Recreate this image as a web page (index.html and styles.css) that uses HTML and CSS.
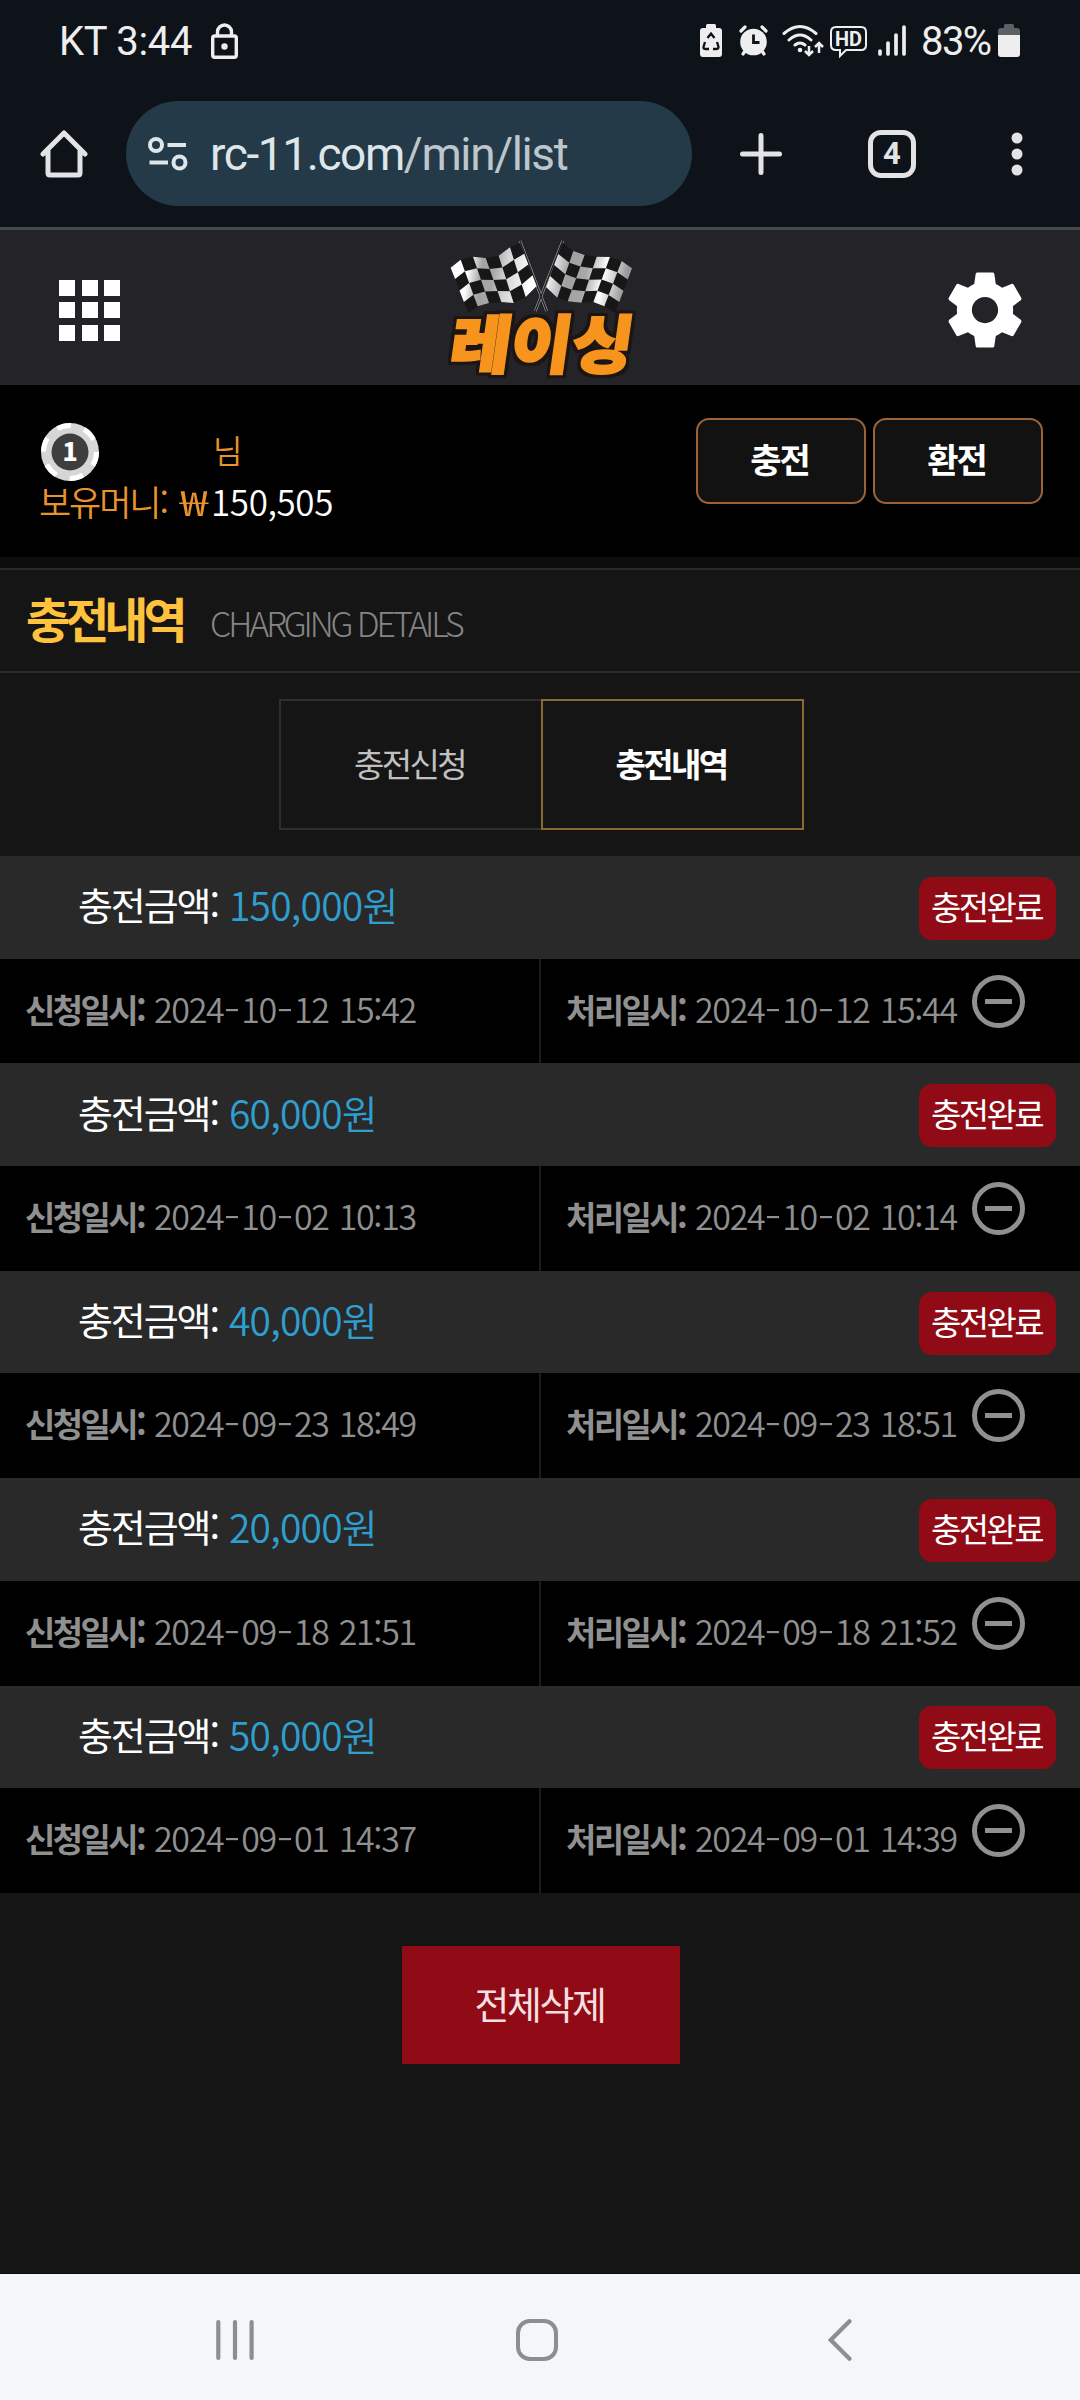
FILE: index.html
```html
<!DOCTYPE html>
<html lang="ko">
<head>
<meta charset="utf-8">
<title>충전내역</title>
<link rel="stylesheet" href="styles.css">
</head>
<body>
<div class="phone">
  <div class="statusbar">
    <span class="carrier">KT 3:44</span>
    <svg class="lock" width="27" height="36" viewBox="0 0 27 36" fill="none" stroke="#eee" stroke-width="3.4"><rect x="1.7" y="13" width="23.6" height="21.3" rx="2"/><path d="M6.5 13V9a7 7 0 0 1 14 0v4"/><circle cx="13.5" cy="23.5" r="3.2" fill="#eee" stroke="none"/></svg>
    <svg class="sicons" width="208" height="34" viewBox="0 0 208 34">
      <path fill="#eee" d="M6 4V1.500q0-1.500 1.500-1.500h7q1.500 0 1.500 1.500V4h3q3 0 3 3v23q0 3-3 3H3q-3 0-3-3V7q0-3 3-3z"/>
      <path d="M7.500 14L11 9.500l3.500 4.500M17 18l1.500 5q0 2-2.500 2h-3M9 25H6q-3 0-2.500-2l1.500-5" stroke="#0d1319" stroke-width="2.300" fill="none"/>
      <g fill="none" stroke="#eee" stroke-width="3.200" stroke-linecap="round"><path d="M41 7l4-4M66 7l-4-4M45 27l-2 3M62 27l2 3"/></g>
      <circle cx="53.500" cy="18" r="13.300" fill="#eee"/><path d="M53.500 10.500v8h6" stroke="#0d1319" stroke-width="2.800" fill="none"/>
      <g fill="none" stroke="#eee" stroke-width="3" stroke-linecap="round"><path d="M84 9.500q16-14 32 0M89 16q11-10 22 0M95 21q5-4 10 0"/></g>
      <circle cx="100" cy="26" r="2.300" fill="#eee"/>
      <path d="M109 22v9m-4-4l4 4 4-4M119 29v-10m-4 4l4-4 4 4" stroke="#eee" stroke-width="2.500" fill="none"/>
      <path d="M136 3h25q5 0 5 5v13q0 5-5 5h-15l-6 6v-6h-4q-5 0-5-5V8q0-5 5-5z" stroke="#eee" stroke-width="2" fill="none"/>
      <text class="hd" x="135" y="22" textLength="27" lengthAdjust="spacingAndGlyphs">HD</text>
      <path d="M180 27v3M188 19v11M196 11v19M204 3v27" stroke="#eee" stroke-width="3.700" stroke-linecap="round"/>
    </svg>
    <span class="percent">83%</span>
    <svg class="battery" width="22" height="34" viewBox="0 0 22 34"><path fill="#5c5f64" d="M6 4V1.500q0-1.500 1.500-1.500h7q1.500 0 1.500 1.500V4h3q3 0 3 3v6H0V7q0-3 3-3z"/><path fill="#eee" d="M0 11h22v19q0 3-3 3H3q-3 0-3-3z"/></svg>
  </div>
  <div class="browserbar">
    <svg class="home" width="48" height="48" viewBox="0 0 48 48" fill="none" stroke="#e3e3e5" stroke-width="5" stroke-linejoin="round" stroke-linecap="round"><path d="M3 24L24 3l21 21M8 21v22q0 2 2 2h28q2 0 2-2V21"/></svg>
    <div class="address">
      <svg width="40" height="34" viewBox="0 0 40 34" fill="none" stroke="#dfe6ea" stroke-width="4"><circle cx="8" cy="8" r="6"/><path d="M19.500 8H38M1.500 25.500H20"/><circle cx="31.500" cy="25.500" r="6"/></svg>
      <span class="url"><span class="host">rc-11.com</span>/min/list</span>
    </div>
    <svg class="plus" width="42" height="42" viewBox="0 0 42 42" stroke="#e3e3e5" stroke-width="5" stroke-linecap="round"><path d="M21 2.500v37M2.500 21h37"/></svg>
    <div class="tabcount">4</div>
    <svg class="dots" width="12" height="44" viewBox="0 0 12 44" fill="#e3e3e5"><circle cx="6" cy="6" r="5.500"/><circle cx="6" cy="22" r="5.500"/><circle cx="6" cy="38" r="5.500"/></svg>
  </div>
  <header class="header">
    <div class="grid"><i></i><i></i><i></i><i></i><i></i><i></i><i></i><i></i><i></i></div>
    <svg class="logo" width="220" height="150" viewBox="0 0 660 450">
      <defs>
        <linearGradient id="shadeL" gradientUnits="userSpaceOnUse" x1="62" y1="0" x2="320" y2="40"><stop offset="0" stop-color="#fff"/><stop offset=".26" stop-color="#fff"/><stop offset=".42" stop-color="#a2a2a2"/><stop offset=".56" stop-color="#a8a8a8"/><stop offset=".7" stop-color="#d4d4d4"/><stop offset="1" stop-color="#fff"/></linearGradient>
        <linearGradient id="shadeR" gradientUnits="userSpaceOnUse" x1="350" y1="0" x2="606" y2="60"><stop offset="0" stop-color="#fff"/><stop offset=".15" stop-color="#eee"/><stop offset=".35" stop-color="#a0a0a0"/><stop offset=".55" stop-color="#a8a8a8"/><stop offset=".75" stop-color="#fff"/><stop offset="1" stop-color="#999"/></linearGradient>
        <filter id="outline" x="-10%" y="-20%" width="120%" height="140%" color-interpolation-filters="sRGB"><feMorphology in="SourceAlpha" operator="dilate" radius="9"/><feGaussianBlur stdDeviation="2" result="fat"/><feFlood flood-color="#1b1513"/><feComposite in2="fat" operator="in"/><feMerge><feMergeNode/><feMergeNode in="SourceGraphic"/></feMerge></filter>
      </defs>
      <g fill="none"><path d="M270 30L350 240M398 30L316 240" stroke="#a9a9a9" stroke-width="8"/><path d="M270 30L350 240M398 30L316 240" stroke="#202024" stroke-width="4.500"/></g>
      <path id="clothL" fill="#191617"/><path id="checksL" fill="url(#shadeL)"/>
      <path id="clothR" fill="#191617"/><path id="checksR" fill="url(#shadeR)"/>
      <g class="wordmark" filter="url(#outline)">
        <text transform="translate(54 0) skewX(-8)" x="56" y="411" textLength="548" lengthAdjust="spacingAndGlyphs">레이싱</text>
      </g>
    </svg>
    <svg class="gear" width="90" height="90" viewBox="0 0 24 24"><path fill="#fff" d="M19.430 12.980c.04-.32.07-.64.07-.98s-.03-.66-.07-.98l2.110-1.650c.19-.15.24-.42.12-.64l-2-3.460c-.12-.22-.39-.3-.61-.22l-2.490 1c-.52-.4-1.080-.73-1.690-.98l-.38-2.650C14.460 2.180 14.250 2 14 2h-4c-.25 0-.46.18-.49.42l-.38 2.650c-.61.25-1.170.59-1.690.98l-2.490-1c-.23-.09-.49 0-.61.22l-2 3.460c-.13.22-.07.49.12.64l2.110 1.650c-.04.32-.07.65-.07.98s.03.66.07.98l-2.110 1.650c-.19.15-.24.42-.12.64l2 3.460c.12.22.39.3.61.22l2.490-1c.52.4 1.080.73 1.690.98l.38 2.650c.03.24.24.42.49.42h4c.25 0 .46-.18.49-.42l.38-2.650c.61-.25 1.170-.59 1.690-.98l2.490 1c.23.09.49 0 .61-.22l2-3.460c.12-.22.07-.49-.12-.64l-2.110-1.650zM12 15.500c-1.930 0-3.500-1.570-3.500-3.500s1.570-3.500 3.500-3.500 3.500 1.570 3.500 3.500-1.570 3.500-3.500 3.500z"/></svg>
  </header>
  <section class="user">
    <div class="who">
      <div class="nameline">
        <svg width="60" height="60" viewBox="0 0 60 60"><circle cx="30" cy="30" r="29" fill="#d6d6d6"/><circle cx="30" cy="30" r="26.500" fill="none" stroke="#fff" stroke-width="5" stroke-dasharray="14 13.750"/><circle cx="30" cy="30" r="18.500" fill="#3e3e3e"/><text class="level" x="30" y="39" text-anchor="middle">1</text></svg>
        <span class="nim">님</span>
      </div>
      <div class="money"><span class="mlabel">보유머니:</span><span class="won">₩</span><span class="mval">150,505</span></div>
    </div>
    <a class="ubtn">충전</a><a class="ubtn">환전</a>
  </section>
  <div class="band"></div>
  <div class="titlebar"><h1>충전내역</h1><span>CHARGING DETAILS</span></div>
  <nav class="tabs"><a>충전신청</a><a class="on">충전내역</a></nav>
  <ul class="list">
    <li><div class="top"><span class="lab">충전금액:</span><span class="amt">150,000<b>원</b></span><span class="badge">충전완료</span></div>
      <div class="times"><div><b>신청일시:</b><time>2024<i>-</i>10<i>-</i>12 15:42</time></div><div><b>처리일시:</b><time>2024<i>-</i>10<i>-</i>12 15:44</time><span class="minus"></span></div></div></li>
    <li><div class="top"><span class="lab">충전금액:</span><span class="amt">60,000<b>원</b></span><span class="badge">충전완료</span></div>
      <div class="times"><div><b>신청일시:</b><time>2024<i>-</i>10<i>-</i>02 10:13</time></div><div><b>처리일시:</b><time>2024<i>-</i>10<i>-</i>02 10:14</time><span class="minus"></span></div></div></li>
    <li><div class="top"><span class="lab">충전금액:</span><span class="amt">40,000<b>원</b></span><span class="badge">충전완료</span></div>
      <div class="times"><div><b>신청일시:</b><time>2024<i>-</i>09<i>-</i>23 18:49</time></div><div><b>처리일시:</b><time>2024<i>-</i>09<i>-</i>23 18:51</time><span class="minus"></span></div></div></li>
    <li><div class="top"><span class="lab">충전금액:</span><span class="amt">20,000<b>원</b></span><span class="badge">충전완료</span></div>
      <div class="times"><div><b>신청일시:</b><time>2024<i>-</i>09<i>-</i>18 21:51</time></div><div><b>처리일시:</b><time>2024<i>-</i>09<i>-</i>18 21:52</time><span class="minus"></span></div></div></li>
    <li><div class="top"><span class="lab">충전금액:</span><span class="amt">50,000<b>원</b></span><span class="badge">충전완료</span></div>
      <div class="times"><div><b>신청일시:</b><time>2024<i>-</i>09<i>-</i>01 14:37</time></div><div><b>처리일시:</b><time>2024<i>-</i>09<i>-</i>01 14:39</time><span class="minus"></span></div></div></li>
  </ul>
  <a class="delete">전체삭제</a>
  <div class="sysnav">
    <svg width="38" height="42" viewBox="0 0 38 42" stroke="#8e8e90" stroke-width="4.200" stroke-linecap="round"><path d="M2.300 3v36M19 3v36M35.600 3v36"/></svg>
    <svg class="navhome" width="42" height="42" viewBox="0 0 42 42" fill="none" stroke="#8e8e90" stroke-width="4"><rect x="2" y="2" width="38" height="38" rx="12"/></svg>
    <svg width="24" height="42" viewBox="0 0 24 42" fill="none" stroke="#8e8e90" stroke-width="4.200" stroke-linecap="round"><path d="M21.500 2.300L2.800 21l18.700 18.700"/></svg>
  </div>
</div>
<script src="flags.js"></script>
</body>
</html>
```
FILE: styles.css
```css
* { box-sizing: border-box; }
body { margin: 0; background: #151515; font-family: "Noto Sans CJK KR", sans-serif; }
a, span, b, time, h1 { white-space: nowrap; }
svg { display: block; flex: none; }
.phone { width: 1080px; height: 2400px; display: flex; flex-direction: column; overflow: hidden; background: #151515; }

.statusbar { height: 82px; flex: none; background: #0d1319; display: flex; align-items: center; padding-left: 59px; font-family: Roboto, sans-serif; color: #eee; font-size: 40px; }
.carrier { width: 152px; letter-spacing: -.3px; }
.sicons { margin-left: 462px; }
.hd { font: 700 20px Roboto, sans-serif; fill: #eee; }
.percent { margin-left: 13px; width: 77px; letter-spacing: -1.6px; }

.browserbar { height: 148px; flex: none; background: #0d1319; border-bottom: 3px solid #434a4e; display: flex; align-items: center; padding: 0 0 2px 40px; }
.address { margin-left: 38px; width: 566px; height: 105px; border-radius: 53px; background: #243a48; display: flex; align-items: center; padding-left: 22px; }
.url { margin-left: 22px; font: 46px Roboto, sans-serif; letter-spacing: -1.4px; color: #bcc6cc; }
.host { color: #dfe6ea; }
.plus { margin-left: 48px; }
.tabcount { margin-left: 86px; width: 48px; height: 48px; border: 5px solid #e3e3e5; border-radius: 13px; color: #e3e3e5; font: 700 31px/38px Roboto, sans-serif; text-align: center; }
.dots { margin-left: 95px; }

.header { height: 155px; flex: none; background: #232328; display: flex; align-items: center; padding-left: 59px; padding-top: 5px; }
.grid { display: grid; grid-template-columns: repeat(3, 16px); grid-auto-rows: 16px; gap: 6.500px; }
.grid i { background: #fff; }
.logo { margin-left: 310px; margin-top: -4px; align-self: flex-start; overflow: visible; }
.wordmark { font: 900 190px "Noto Sans CJK KR", sans-serif; fill: #f7941d; stroke: #f7941d; stroke-width: 7px; }
.gear { margin-left: 290px; }

.user { height: 172px; flex: none; background: #000; display: flex; align-items: flex-start; padding: 33px 0 0 40px; }
.who { width: 656px; }
.nameline { display: flex; align-items: center; height: 66px; }
.nameline svg { margin-top: 2px; }
.level { font: 900 25px "Noto Sans CJK KR", sans-serif; fill: #fff; }
.nim { margin: -4px 0 0 113px; font-size: 32px; font-weight: 350; line-height: 40px; color: #e8932c; }
.money { display: flex; font-size: 35px; line-height: 36px; margin-top: -1px; font-weight: 350; color: #e8932c; }
.mlabel { margin-left: -1px; width: 141px; letter-spacing: -2.100px; }
.mval { font-weight: 350; color: #fff; letter-spacing: -.4px; }
.won { width: 31px; transform: scaleX(1.450); transform-origin: 0 50%; }
.ubtn { width: 170px; height: 86px; margin-right: 7px; padding-right: 3px; border: 2px solid #9c6239; border-radius: 13px; background: #121212; color: #fff; font-weight: 700; font-size: 34px; line-height: 78px; text-align: center; letter-spacing: -2px; }

.band { height: 11px; flex: none; background: #0d0d0d; }
.titlebar { height: 105px; flex: none; border-top: 2px solid #2b2b2b; border-bottom: 2px solid #2b2b2b; display: flex; padding-left: 26px; }
h1 { margin: 0; width: 184px; font-size: 48px; line-height: 94px; font-weight: 700; letter-spacing: -5px; color: #ffc23d; }
.titlebar span { font-weight: 300; font-size: 34px; line-height: 105px; letter-spacing: -3.100px; color: #858585; }
.tabs { flex: none; margin: 26px 0 26px 279px; display: flex; height: 131px; }
.tabs a { width: 262px; padding-right: 3px; border: 2px solid #2e2e2e; border-right: 0; color: #c0c0c0; font-size: 33px; line-height: 125px; text-align: center; letter-spacing: -2.600px; }
.tabs .on { width: 263px; border: 2px solid #886a35; color: #fff; font-weight: 700; }

.list { list-style: none; margin: 0; padding: 0; flex: none; }
.top { height: 102.700px; background: #292929; display: flex; align-items: center; padding: 0 24px 0 78px; color: #fff; font-size: 38px; }
.lab { width: 151px; line-height: 50px; margin-top: -6px; letter-spacing: -2.100px; }
.amt { line-height: 50px; margin-top: -6px; color: #2f9fd0; font-size: 39px; letter-spacing: -.8px; font-weight: 350; }
.amt b { font-weight: 350; }
.badge { margin-left: auto; margin-top: 2px; width: 137px; height: 63px; padding-right: 2px; border-radius: 13px; background: #900b15; font-size: 33px; line-height: 59px; text-align: center; letter-spacing: -2.600px; }
.times { height: 104.700px; display: flex; background: #000; color: #909090; font-size: 34px; }
.times div { width: 541px; height: 100%; padding-left: 25px; display: flex; line-height: 100px; border-right: 2px solid #1c1c1c; }
.times div + div { width: 539px; border: 0; }
.times b { width: 129px; font-size: 33px; letter-spacing: -2.600px; }
.times time { width: 277px; font-weight: 350; letter-spacing: -1.350px; word-spacing: 2px; }
.times i { display: inline-block; width: 18px; font-style: normal; letter-spacing: 0; text-align: center; transform: scaleX(1.400); }
.minus { width: 53px; height: 53px; margin-top: 16px; border: 5px solid #909090; border-radius: 50%; display: flex; align-items: center; justify-content: center; }
.minus::before { content: ""; width: 27px; height: 5px; background: #909090; }

.delete { flex: none; margin: 53px 0 0 402px; width: 278px; height: 118px; padding-right: 3px; background: #900b15; color: #f6dfe1; font-size: 38px; line-height: 114px; text-align: center; letter-spacing: -2.500px; }
.sysnav { flex: none; margin-top: auto; height: 127px; border-top: 1px solid #0b0b0b; background: #f4f7fa; display: flex; align-items: center; padding: 5px 228px 0 216px; justify-content: space-between; }
.navhome { margin-right: 8px; }
```
FILE: flags.js
```js
// Builds the chequered cloth of each flag from its wavy top and bottom edges.
function drawFlag(side, top, bottom, parity) {
  var rows = 4, d = "";
  function at(i, j) {
    var t = j / rows;
    return (top[i][0] + (bottom[i][0] - top[i][0]) * t) + " " + (top[i][1] + (bottom[i][1] - top[i][1]) * t);
  }
  for (var i = 0; i < top.length - 1; i++) {
    for (var j = 0; j < rows; j++) {
      if ((i + j) % 2 === parity) {
        d += "M" + at(i, j) + "L" + at(i + 1, j) + "L" + at(i + 1, j + 1) + "L" + at(i, j + 1) + "Z";
      }
    }
  }
  document.getElementById("checks" + side).setAttribute("d", d);
  document.getElementById("cloth" + side).setAttribute("d", "M" + top.concat(bottom.slice().reverse()).map(function (p) { return p.join(" "); }).join("L") + "Z");
}
drawFlag("L",
  [[62,110],[92,86],[129,77],[167,81],[206,74],[240,49],[270,36]],
  [[115,247],[143,226],[177,216],[214,213],[251,216],[287,198],[320,165]], 0);
drawFlag("R",
  [[397,36],[430,60],[464,72],[500,77],[540,78],[575,90],[606,112]],
  [[348,168],[382,200],[413,211],[454,215],[490,213],[523,226],[555,247]], 1);
```
